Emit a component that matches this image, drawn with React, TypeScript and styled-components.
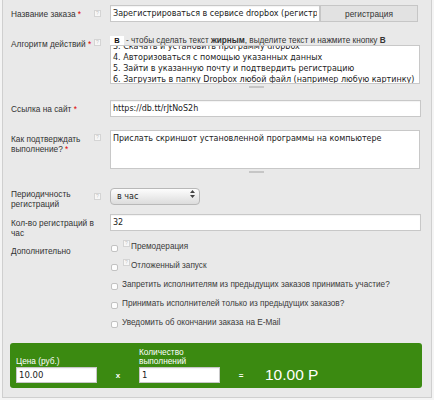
import React, { useEffect, useRef } from 'react'
import styled, { createGlobalStyle } from 'styled-components'

const GlobalStyle = createGlobalStyle`
  html, body {
    margin: 0;
    padding: 0;
    background: #f4f4f4;
  }
  body {
    font-family: 'Liberation Sans', Arial, sans-serif;
  }
`

const inputFont = `'DejaVu Sans', 'Liberation Sans', sans-serif`

const Panel = styled.div`
  box-sizing: border-box;
  width: 430px;
  margin-left: 2px;
  padding: 5px 10px 9px 8px;
  background: #e9e9e9;
  border: 1px solid #cfcfcf;
  border-top: none;
  color: #333;
`

const Row = styled.div<{ $gap?: number }>`
  display: grid;
  grid-template-columns: 83px 16px 311px;
  margin-bottom: ${(p) => p.$gap ?? 13}px;
`

const Label = styled.div`
  padding-top: 4px;
  font-size: 8.3px;
  line-height: 10px;
  color: #333;
`

const Line = styled.span`
  display: block;
`

const Req = styled.span`
  color: #e00000;
`

const Help = styled.span<{ $top?: number }>`
  display: block;
  flex: none;
  box-sizing: border-box;
  width: 7px;
  height: 7px;
  margin: ${(p) => p.$top ?? 6}px 0 0 0;
  border: 1px solid #d4d4d4;
  background: #f7f7f7;
  color: #c4c4c4;
  font-size: 5px;
  font-weight: normal;
  line-height: 5px;
  text-align: center;
`

const Field = styled.div`
  display: flex;
  flex-direction: column;
  align-items: flex-start;
`

const TextInput = styled.input<{ $width?: number }>`
  box-sizing: border-box;
  width: ${(p) => p.$width ?? 311}px;
  height: 17px;
  padding: 0 2px;
  border: 1px solid #c8c8c8;
  background: #fff;
  box-shadow: inset 0 1px 1px rgba(0, 0, 0, 0.05);
  font-family: ${inputFont};
  font-size: 8px;
  color: #222;
  outline: none;
`

const TitleField = styled.div`
  display: flex;
`

const GreyButton = styled.button`
  box-sizing: border-box;
  width: 98px;
  height: 17px;
  padding: 0;
  border: 1px solid #c6c6c6;
  background: #e2e2e2;
  font-family: 'Liberation Sans', Arial, sans-serif;
  font-size: 8.3px;
  color: #333;
`

const Toolbar = styled.div`
  display: flex;
  align-items: center;
  height: 10px;
  font-size: 8.2px;
  color: #333;
  white-space: nowrap;
`

const BoldButton = styled.span`
  display: inline-block;
  width: 14px;
  height: 9px;
  margin-right: 2px;
  background: #fff;
  font-size: 7.5px;
  font-weight: bold;
  line-height: 9px;
  text-align: center;
  color: #111;
`

const TextArea = styled.textarea`
  box-sizing: border-box;
  width: 310px;
  height: 39px;
  margin: 0;
  padding: 2px 2px;
  border: 1px solid #c8c8c8;
  background: #fff;
  font-family: ${inputFont};
  font-size: 8px;
  line-height: 11px;
  color: #222;
  resize: none;
  overflow: hidden;
  outline: none;
  display: block;
`

const Grippie = styled.div`
  width: 310px;
  height: 5px;

  &::after {
    content: '';
    display: block;
    width: 15px;
    height: 2px;
    margin: 2px 0 0 139px;
    background: #c6c6c6;
  }
`

const SelectWrap = styled.div`
  position: relative;
  width: 90px;
  height: 17px;
`

const Select = styled.select`
  box-sizing: border-box;
  width: 100%;
  height: 100%;
  padding: 0 6px;
  appearance: none;
  border: 1px solid #b8b8b8;
  border-radius: 4px;
  background: linear-gradient(#fdfdfd, #dcdcdc);
  font-family: ${inputFont};
  font-size: 8px;
  color: #222;
  outline: none;
`

const Arrows = styled.svg`
  position: absolute;
  right: 5px;
  top: 5px;
  pointer-events: none;
`

const Checks = styled.div`
  display: flex;
  flex-direction: column;
  padding-left: 1px;
`

const CheckItem = styled.label`
  display: flex;
  align-items: flex-start;
  height: 19px;
  font-size: 8.2px;
  line-height: 10px;
  color: #3a3a3a;
  white-space: nowrap;
`

const CheckBox = styled.span`
  flex: none;
  box-sizing: border-box;
  width: 7px;
  height: 7px;
  margin: 3px 4px 0 0;
  border: 1px solid #c2c2c2;
  border-radius: 2px;
  background: #fdfdfd;
`

const CheckHelp = styled(Help)`
  margin: -2px 1px 0 1px;
`

const Total = styled.div`
  display: flex;
  align-items: flex-end;
  width: 412px;
  box-sizing: border-box;
  margin-left: -1px;
  padding: 5px 6px 5px;
  background: #3b8a11;
  border-radius: 3px;
  color: #fff;
`

const PriceField = styled.div`
  display: flex;
  flex-direction: column;
  width: 81px;
`

const PriceLabel = styled.div`
  margin-bottom: 2px;
  font-size: 8.3px;
  line-height: 8.5px;
`

const PriceInput = styled(TextInput)`
  width: 81px;
  height: 16px;
  font-size: 8.5px;
`

const Sign = styled.div`
  width: 42px;
  height: 16px;
  font-size: 8px;
  font-weight: bold;
  line-height: 17px;
  text-align: center;
`

const Sum = styled.div`
  margin-left: 3px;
  height: 16px;
  font-size: 15.5px;
  line-height: 16px;
`

const steps = [
  '1. Перейти по ссылке https://db.tt/rJtNoS2h',
  '2. Зарегистрироваться с помощью e-mail',
  '3. Скачать и установить программу dropbox',
  '4. Авторизоваться с помощью указанных данных',
  '5. Зайти в указанную почту и подтвердить регистрацию',
  '6. Загрузить в папку Dropbox любой файл (например любую картинку)',
].join('\n')

export default function App() {
  const stepsRef = useRef<HTMLTextAreaElement>(null)

  useEffect(() => {
    if (stepsRef.current) stepsRef.current.scrollTop = 29
  }, [])

  return (
    <>
      <GlobalStyle />
      <Panel>
        <Row>
          <Label>
            Название заказа <Req>*</Req>
          </Label>
          <Help $top={5}>?</Help>
          <TitleField>
            <TextInput
              $width={210}
              defaultValue="Зарегистрироваться в сервисе dropbox (регистрация по ссылке)"
            />
            <GreyButton>регистрация</GreyButton>
          </TitleField>
        </Row>

        <Row $gap={11}>
          <Label>
            Алгоритм действий <Req>*</Req>
          </Label>
          <Help $top={4}>?</Help>
          <Field>
            <Toolbar>
              <BoldButton>B</BoldButton>
              <span>
                - чтобы сделать текст <b>жирным</b>, выделите текст и нажмите кнопку <b>B</b>
              </span>
            </Toolbar>
            <TextArea ref={stepsRef} defaultValue={steps} />
            <Grippie />
          </Field>
        </Row>

        <Row>
          <Label>
            Ссылка на сайт <Req>*</Req>
          </Label>
          <span />
          <TextInput defaultValue="https://db.tt/rJtNoS2h" />
        </Row>

        <Row $gap={11}>
          <Label>
            <Line>Как подтверждать</Line>
            <Line>
              выполнение? <Req>*</Req>
            </Line>
          </Label>
          <Help $top={4}>?</Help>
          <Field>
            <TextArea defaultValue="Прислать скриншот установленной программы на компьютере" />
            <Grippie />
          </Field>
        </Row>

        <Row $gap={5}>
          <Label>Периодичность регистраций</Label>
          <Help $top={8}>?</Help>
          <SelectWrap>
            <Select defaultValue="hour">
              <option value="hour">в час</option>
              <option value="day">в день</option>
            </Select>
            <Arrows width="5" height="8" viewBox="0 0 5 8">
              <path d="M2.5 0 L5 3 H0 Z M2.5 8 L5 5 H0 Z" fill="#444" />
            </Arrows>
          </SelectWrap>
        </Row>

        <Row $gap={4}>
          <Label>Кол-во регистраций в час</Label>
          <span />
          <TextInput defaultValue="32" />
        </Row>

        <Row $gap={6}>
          <Label>Дополнительно</Label>
          <span />
          <Checks>
            <CheckItem>
              <CheckBox />
              <CheckHelp>?</CheckHelp>
              Премодерация
            </CheckItem>
            <CheckItem>
              <CheckBox />
              <CheckHelp>?</CheckHelp>
              Отложенный запуск
            </CheckItem>
            <CheckItem>
              <CheckBox />
              Запретить исполнителям из предыдущих заказов принимать участие?
            </CheckItem>
            <CheckItem>
              <CheckBox />
              Принимать исполнителей только из предыдущих заказов?
            </CheckItem>
            <CheckItem>
              <CheckBox />
              Уведомить об окончании заказа на E-Mail
            </CheckItem>
          </Checks>
        </Row>

        <Total>
          <PriceField>
            <PriceLabel>Цена (руб.)</PriceLabel>
            <PriceInput defaultValue="10.00" />
          </PriceField>
          <Sign>x</Sign>
          <PriceField>
            <PriceLabel>
              Количество
              <br />
              выполнений
            </PriceLabel>
            <PriceInput defaultValue="1" />
          </PriceField>
          <Sign>=</Sign>
          <Sum>10.00 Р</Sum>
        </Total>
      </Panel>
    </>
  )
}
